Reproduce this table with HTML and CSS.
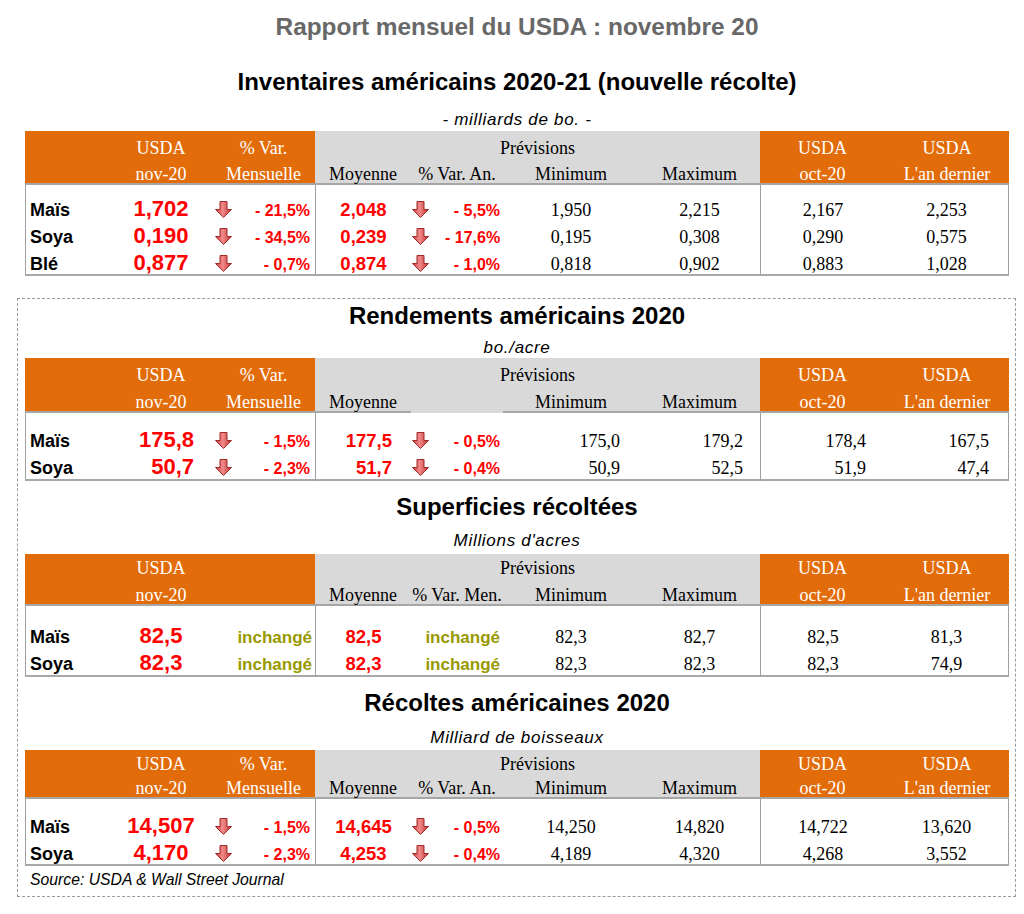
FILE: index.html
```html
<!DOCTYPE html>
<html lang="fr">
<head>
<meta charset="utf-8">
<title>Rapport mensuel du USDA : novembre 20</title>
<link rel="stylesheet" href="styles.css">
</head>
<body>
<svg class="defs" aria-hidden="true">
  <defs>
    <linearGradient id="ag" x1="0" y1="0" x2="1" y2="0">
      <stop offset="0" stop-color="#d43c3c"/>
      <stop offset="0.45" stop-color="#f08a8a"/>
      <stop offset="1" stop-color="#c42e2e"/>
    </linearGradient>
    <symbol id="down" viewBox="0 0 17 17">
      <path d="M5 .5H12V8.5H16.5L8.5 16.5L.5 8.5H5Z" fill="url(#ag)" stroke="#9e2a2a" stroke-width="1" stroke-linejoin="round"/>
    </symbol>
  </defs>
</svg>

<main class="report">
  <h1 class="report-title">Rapport mensuel du USDA : novembre 20</h1>

  <section class="block block--lead b1">
    <h2 class="block-title">Inventaires américains 2020-21 (nouvelle récolte)</h2>
    <p class="unit">- milliards de bo. -</p>
    <table class="grid t1">
      <colgroup>
        <col class="w-lbl"><col class="w-usda"><col class="w-arr"><col class="w-pct">
        <col class="w-avg"><col class="w-arr2"><col class="w-pct2">
        <col class="w-min"><col class="w-max"><col class="w-oct"><col class="w-last">
      </colgroup>
      <thead>
        <tr class="hrow1">
          <th class="hd-o"></th><th class="hd-o">USDA</th><th class="hd-o" colspan="2">% Var.</th>
          <th class="hd-g" colspan="5">Prévisions</th>
          <th class="hd-o">USDA</th><th class="hd-o">USDA</th>
        </tr>
        <tr class="hrow2">
          <th class="hd-o"></th><th class="hd-o">nov-20</th><th class="hd-o" colspan="2">Mensuelle</th>
          <th class="hd-g">Moyenne</th><th class="hd-g" colspan="2">% Var. An.</th><th class="hd-g">Minimum</th><th class="hd-g">Maximum</th>
          <th class="hd-o">oct-20</th><th class="hd-o">L'an dernier</th>
        </tr>
      </thead>
      <tbody>
        <tr class="first">
          <td class="lbl">Maïs</td><td class="val c-usda">1,702</td>
          <td class="arr"><svg class="arrow"><use href="#down"/></svg></td><td class="pct">- 21,5%</td>
          <td class="val val--avg sep c-avg">2,048</td>
          <td class="arr arr--g"><svg class="arrow"><use href="#down"/></svg></td><td class="pct pct--g">- 5,5%</td>
          <td class="num c-min">1,950</td><td class="num c-max">2,215</td>
          <td class="num sep c-oct">2,167</td><td class="num end c-last">2,253</td>
        </tr>
        <tr>
          <td class="lbl">Soya</td><td class="val c-usda">0,190</td>
          <td class="arr"><svg class="arrow"><use href="#down"/></svg></td><td class="pct">- 34,5%</td>
          <td class="val val--avg sep c-avg">0,239</td>
          <td class="arr arr--g"><svg class="arrow"><use href="#down"/></svg></td><td class="pct pct--g">- 17,6%</td>
          <td class="num c-min">0,195</td><td class="num c-max">0,308</td>
          <td class="num sep c-oct">0,290</td><td class="num end c-last">0,575</td>
        </tr>
        <tr class="last">
          <td class="lbl">Blé</td><td class="val c-usda">0,877</td>
          <td class="arr"><svg class="arrow"><use href="#down"/></svg></td><td class="pct">- 0,7%</td>
          <td class="val val--avg sep c-avg">0,874</td>
          <td class="arr arr--g"><svg class="arrow"><use href="#down"/></svg></td><td class="pct pct--g">- 1,0%</td>
          <td class="num c-min">0,818</td><td class="num c-max">0,902</td>
          <td class="num sep c-oct">0,883</td><td class="num end c-last">1,028</td>
        </tr>
      </tbody>
    </table>
  </section>

  <div class="dashed">
    <section class="block b2">
      <h2 class="block-title">Rendements américains 2020</h2>
      <p class="unit">bo./acre</p>
      <table class="grid t2 grid--right">
        <colgroup>
          <col class="w-lbl"><col class="w-usda"><col class="w-arr"><col class="w-pct">
          <col class="w-avg"><col class="w-arr2"><col class="w-pct2">
          <col class="w-min"><col class="w-max"><col class="w-oct"><col class="w-last">
        </colgroup>
        <thead>
          <tr class="hrow1">
            <th class="hd-o"></th><th class="hd-o">USDA</th><th class="hd-o" colspan="2">% Var.</th>
            <th class="hd-g" colspan="5">Prévisions</th>
            <th class="hd-o">USDA</th><th class="hd-o">USDA</th>
          </tr>
          <tr class="hrow2">
            <th class="hd-o"></th><th class="hd-o">nov-20</th><th class="hd-o" colspan="2">Mensuelle</th>
            <th class="hd-g">Moyenne</th><th class="hd-g nb" colspan="2"></th><th class="hd-g">Minimum</th><th class="hd-g">Maximum</th>
            <th class="hd-o">oct-20</th><th class="hd-o">L'an dernier</th>
          </tr>
        </thead>
        <tbody>
          <tr class="first">
            <td class="lbl">Maïs</td><td class="val c-usda">175,8</td>
            <td class="arr"><svg class="arrow"><use href="#down"/></svg></td><td class="pct">- 1,5%</td>
            <td class="val val--avg sep c-avg">177,5</td>
            <td class="arr arr--g"><svg class="arrow"><use href="#down"/></svg></td><td class="pct pct--g">- 0,5%</td>
            <td class="num c-min">175,0</td><td class="num c-max">179,2</td>
            <td class="num sep c-oct">178,4</td><td class="num end c-last">167,5</td>
          </tr>
          <tr class="last">
            <td class="lbl">Soya</td><td class="val c-usda">50,7</td>
            <td class="arr"><svg class="arrow"><use href="#down"/></svg></td><td class="pct">- 2,3%</td>
            <td class="val val--avg sep c-avg">51,7</td>
            <td class="arr arr--g"><svg class="arrow"><use href="#down"/></svg></td><td class="pct pct--g">- 0,4%</td>
            <td class="num c-min">50,9</td><td class="num c-max">52,5</td>
            <td class="num sep c-oct">51,9</td><td class="num end c-last">47,4</td>
          </tr>
        </tbody>
      </table>
    </section>

    <section class="block b3">
      <h2 class="block-title">Superficies récoltées</h2>
      <p class="unit">Millions d'acres</p>
      <table class="grid t3">
        <colgroup>
          <col class="w-lbl"><col class="w-usda"><col class="w-arr"><col class="w-pct">
          <col class="w-avg"><col class="w-arr2"><col class="w-pct2">
          <col class="w-min"><col class="w-max"><col class="w-oct"><col class="w-last">
        </colgroup>
        <thead>
          <tr class="hrow1">
            <th class="hd-o"></th><th class="hd-o">USDA</th><th class="hd-o" colspan="2"></th>
            <th class="hd-g" colspan="5">Prévisions</th>
            <th class="hd-o">USDA</th><th class="hd-o">USDA</th>
          </tr>
          <tr class="hrow2">
            <th class="hd-o"></th><th class="hd-o">nov-20</th><th class="hd-o" colspan="2"></th>
            <th class="hd-g">Moyenne</th><th class="hd-g" colspan="2">% Var. Men.</th><th class="hd-g">Minimum</th><th class="hd-g">Maximum</th>
            <th class="hd-o">oct-20</th><th class="hd-o">L'an dernier</th>
          </tr>
        </thead>
        <tbody>
          <tr class="first">
            <td class="lbl">Maïs</td><td class="val c-usda">82,5</td>
            <td class="same" colspan="2">inchangé</td>
            <td class="val val--avg sep c-avg">82,5</td>
            <td class="same same--g" colspan="2">inchangé</td>
            <td class="num c-min">82,3</td><td class="num c-max">82,7</td>
            <td class="num sep c-oct">82,5</td><td class="num end c-last">81,3</td>
          </tr>
          <tr class="last">
            <td class="lbl">Soya</td><td class="val c-usda">82,3</td>
            <td class="same" colspan="2">inchangé</td>
            <td class="val val--avg sep c-avg">82,3</td>
            <td class="same same--g" colspan="2">inchangé</td>
            <td class="num c-min">82,3</td><td class="num c-max">82,3</td>
            <td class="num sep c-oct">82,3</td><td class="num end c-last">74,9</td>
          </tr>
        </tbody>
      </table>
    </section>

    <section class="block b4">
      <h2 class="block-title">Récoltes américaines 2020</h2>
      <p class="unit">Milliard de boisseaux</p>
      <table class="grid t4">
        <colgroup>
          <col class="w-lbl"><col class="w-usda"><col class="w-arr"><col class="w-pct">
          <col class="w-avg"><col class="w-arr2"><col class="w-pct2">
          <col class="w-min"><col class="w-max"><col class="w-oct"><col class="w-last">
        </colgroup>
        <thead>
          <tr class="hrow1">
            <th class="hd-o"></th><th class="hd-o">USDA</th><th class="hd-o" colspan="2">% Var.</th>
            <th class="hd-g" colspan="5">Prévisions</th>
            <th class="hd-o">USDA</th><th class="hd-o">USDA</th>
          </tr>
          <tr class="hrow2">
            <th class="hd-o"></th><th class="hd-o">nov-20</th><th class="hd-o" colspan="2">Mensuelle</th>
            <th class="hd-g">Moyenne</th><th class="hd-g" colspan="2">% Var. An.</th><th class="hd-g">Minimum</th><th class="hd-g">Maximum</th>
            <th class="hd-o">oct-20</th><th class="hd-o">L'an dernier</th>
          </tr>
        </thead>
        <tbody>
          <tr class="first">
            <td class="lbl">Maïs</td><td class="val c-usda">14,507</td>
            <td class="arr"><svg class="arrow"><use href="#down"/></svg></td><td class="pct">- 1,5%</td>
            <td class="val val--avg sep c-avg">14,645</td>
            <td class="arr arr--g"><svg class="arrow"><use href="#down"/></svg></td><td class="pct pct--g">- 0,5%</td>
            <td class="num c-min">14,250</td><td class="num c-max">14,820</td>
            <td class="num sep c-oct">14,722</td><td class="num end c-last">13,620</td>
          </tr>
          <tr class="last">
            <td class="lbl">Soya</td><td class="val c-usda">4,170</td>
            <td class="arr"><svg class="arrow"><use href="#down"/></svg></td><td class="pct">- 2,3%</td>
            <td class="val val--avg sep c-avg">4,253</td>
            <td class="arr arr--g"><svg class="arrow"><use href="#down"/></svg></td><td class="pct pct--g">- 0,4%</td>
            <td class="num c-min">4,189</td><td class="num c-max">4,320</td>
            <td class="num sep c-oct">4,268</td><td class="num end c-last">3,552</td>
          </tr>
        </tbody>
      </table>
    </section>

    <p class="source">Source: USDA &amp; Wall Street Journal</p>
  </div>
</main>
</body>
</html>
```

FILE: styles.css
```css
* { box-sizing: border-box; }

html, body {
  margin: 0;
  padding: 0;
  background: #ffffff;
}

body {
  font-family: "Liberation Sans", Arial, sans-serif;
  color: #000000;
}

.defs {
  display: block;
  width: 0;
  height: 0;
  overflow: hidden;
}

.report {
  width: 1024px;
  padding-left: 17px;
}

.report-title {
  width: 984px;
  margin: 13px 0 0 8px;
  font-size: 24.4px;
  line-height: 28px;
  font-weight: bold;
  color: #686868;
  text-align: center;
}

.block {
  width: 984px;
}

.block--lead {
  margin-left: 8px;
}

.block-title {
  margin: 0;
  font-size: 24px;
  line-height: 26px;
  font-weight: bold;
  text-align: center;
}

.unit {
  margin: 0;
  font-size: 17px;
  line-height: 18px;
  letter-spacing: 0.7px;
  font-style: italic;
  text-align: center;
}

/* vertical rhythm per block */
.b1 .block-title { margin-top: 28px; }
.b1 .unit { margin-top: 16px; }
.b1 .grid { margin-top: 2px; }

.b2 .block-title { margin-top: 4px; }
.b2 .unit { margin-top: 10px; }
.b2 .grid { margin-top: 1px; }

.b3 .block-title { margin-top: 13px; }
.b3 .unit { margin-top: 12px; }
.b3 .grid { margin-top: 4px; }

.b4 .block-title { margin-top: 13px; }
.b4 .unit { margin-top: 13px; }
.b4 .grid { margin-top: 3px; }

.dashed {
  width: 999px;
  margin-top: 22px;
  padding: 0 6px 7px 7px;
  border: 1px dashed #9c9c9c;
}

.source {
  margin: 5px 0 0 5px;
  font-size: 15.75px;
  line-height: 18px;
  font-style: italic;
}

/* tables */
.grid {
  width: 984px;
  table-layout: fixed;
  border-collapse: separate;
  border-spacing: 0;
}

.w-lbl { width: 85px; }
.w-usda { width: 102px; }
.w-arr { width: 28px; }
.w-pct { width: 75px; }
.w-avg { width: 96px; }
.w-arr2 { width: 34px; }
.w-pct2 { width: 58px; }
.w-min { width: 136px; }
.w-max { width: 121px; }
.w-oct { width: 125px; }
.w-last { width: 124px; }

.grid th {
  padding: 0;
  font-family: "Liberation Serif", "Times New Roman", serif;
  font-weight: normal;
  font-size: 18px;
  line-height: 18px;
  vertical-align: bottom;
  text-align: center;
  white-space: nowrap;
}

.hd-o {
  background: #e36c0a;
  color: #ffffff;
}

.hd-g {
  background: #d9d9d9;
  color: #000000;
}

.hrow2 th {
  border-bottom: 2px solid #a6a6a6;
}

.hrow2 th.nb {
  border-bottom-color: #d9d9d9;
}

.t1 .hrow1, .t2 .hrow1 { height: 26px; }
.t1 .hrow2 { height: 28px; }
.t2 .hrow2 { height: 29px; }
.t3 .hrow1, .t4 .hrow1 { height: 23px; }
.t3 .hrow2 { height: 29px; }
.t4 .hrow2 { height: 26px; }

.grid td {
  padding: 0;
  font-family: "Liberation Serif", "Times New Roman", serif;
  font-size: 18px;
  line-height: 18px;
  vertical-align: baseline;
  text-align: center;
  white-space: nowrap;
}

.grid tr { height: 27px; }

.t1 .first td { padding-top: 15px; }
.t1 .first { height: 42px; }
.t1 .last { height: 22px; }

.t2 .first td { padding-top: 18px; }
.t2 .first { height: 45px; }
.t2 .last { height: 23px; }

.t3 .first td { padding-top: 21px; }
.t3 .first { height: 48px; }
.t3 .last { height: 23px; }

.t4 .first td { padding-top: 18px; }
.t4 .first { height: 45px; }
.t4 .last { height: 21px; }

.grid .last td {
  border-bottom: 2px solid #a8a8a8;
}

.grid td.lbl {
  padding-left: 4px;
  text-align: left;
  font-family: "Liberation Sans", Arial, sans-serif;
  font-weight: bold;
  font-size: 18px;
  border-left: 1px solid #a0a0a0;
}

.grid td.val {
  font-family: "Liberation Sans", Arial, sans-serif;
  font-weight: bold;
  font-size: 22px;
  color: #ff0000;
}

.grid td.val--avg {
  font-size: 18.5px;
}

.grid td.arr {
  padding-left: 3px;
  text-align: left;
}

.grid td.arr--g {
  padding-left: 1px;
}

.arrow {
  display: inline-block;
  width: 17px;
  height: 17px;
  vertical-align: -2px;
}

.grid td.pct {
  padding-right: 5px;
  text-align: right;
  font-family: "Liberation Sans", Arial, sans-serif;
  font-weight: bold;
  font-size: 16px;
  color: #ff0000;
}

.grid td.pct--g {
  padding-right: 3px;
}

.grid td.same {
  padding-right: 3px;
  text-align: right;
  font-family: "Liberation Sans", Arial, sans-serif;
  font-weight: bold;
  font-size: 17px;
  color: #999900;
}

.grid td.same--g {
  padding-right: 3px;
}

.grid td.sep {
  border-left: 1px solid #a0a0a0;
}

.grid td.end {
  border-right: 1px solid #a0a0a0;
}

/* right-aligned numeric variant (yields table) */
.grid--right td.c-usda { text-align: right; padding-right: 18px; }
.grid--right td.c-avg { text-align: right; padding-right: 19px; }
.grid--right td.c-min { text-align: right; padding-right: 19px; }
.grid--right td.c-max { text-align: right; padding-right: 17px; }
.grid--right td.c-oct { text-align: right; padding-right: 19px; }
.grid--right td.c-last { text-align: right; padding-right: 19px; }
```
